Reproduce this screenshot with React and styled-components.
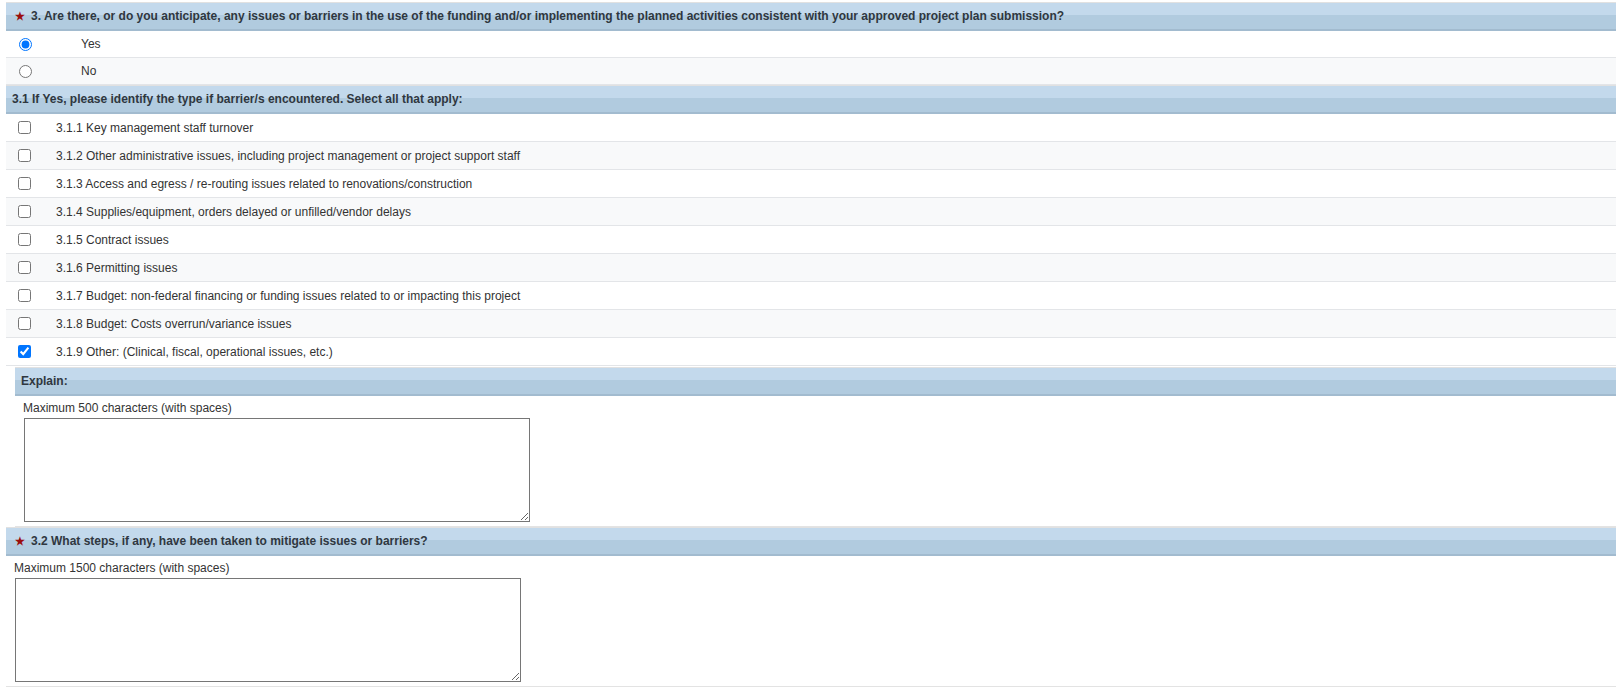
import React from 'react';
import styled, { createGlobalStyle } from 'styled-components';

const GlobalStyle = createGlobalStyle`
  body {
    margin: 0;
    background: #fff;
    font-family: "Liberation Sans", Arial, sans-serif;
    font-size: 12px;
    color: #333;
  }
`;

const Page = styled.div`
  padding: 2px 5px 0 6px;
`;

const Header = styled.div`
  display: flex;
  align-items: center;
  gap: 6px;
  height: 26px;
  padding-left: ${p => (p.$required ? '9px' : '6px')};
  border-top: 1px solid #e1e1e1;
  border-bottom: 2px solid #a2bbcf;
  background: linear-gradient(to bottom, #c3d9ec 0, #c3d9ec 12px, #b1cbdf 12px, #b1cbdf 100%);
  font-weight: bold;
  color: #2f3740;
`;

const Star = styled.span`
  color: #9b0d0d;
  font-size: 11px;
  line-height: 1;
`;

const OptionRow = styled.label`
  display: flex;
  align-items: center;
  gap: ${p => p.$gap}px;
  height: ${p => p.$height}px;
  padding-left: ${p => p.$pad}px;
  border-bottom: 1px solid #e3e5e8;
  background: ${p => (p.$shade ? '#f8f9fa' : '#fff')};
  color: #333;

  input {
    margin: 0;
    width: 13px;
    height: 13px;
  }
`;

const SubBlock = styled.div`
  margin: ${p => p.$top}px 0 0 ${p => p.$indent}px;
  padding-bottom: 4px;
  border-bottom: 1px solid #e3e3e3;
`;

const Hint = styled.div`
  padding: 5px 0 0 8px;
  line-height: 14px;
  color: #333;
`;

const TextBox = styled.textarea`
  display: block;
  box-sizing: border-box;
  width: 506px;
  height: 104px;
  margin: 3px 0 0 8.5px;
  border: 1px solid #767676;
  font-family: "Liberation Sans", Arial, sans-serif;
  font-size: 12px;
`;

const barriers = [
  '3.1.1 Key management staff turnover',
  '3.1.2 Other administrative issues, including project management or project support staff',
  '3.1.3 Access and egress / re-routing issues related to renovations/construction',
  '3.1.4 Supplies/equipment, orders delayed or unfilled/vendor delays',
  '3.1.5 Contract issues',
  '3.1.6 Permitting issues',
  '3.1.7 Budget: non-federal financing or funding issues related to or impacting this project',
  '3.1.8 Budget: Costs overrun/variance issues',
  '3.1.9 Other: (Clinical, fiscal, operational issues, etc.)',
];

export default function App() {
  return (
    <Page>
      <GlobalStyle />
      <Header $required>
        <Star>★</Star>
        3. Are there, or do you anticipate, any issues or barriers in the use of the funding and/or implementing the planned activities consistent with your approved project plan submission?
      </Header>
      <OptionRow $height={26} $pad={13} $gap={49}>
        <input type="radio" name="q3" defaultChecked />
        Yes
      </OptionRow>
      <OptionRow $height={26} $pad={13} $gap={49} $shade>
        <input type="radio" name="q3" />
        No
      </OptionRow>

      <Header>3.1 If Yes, please identify the type if barrier/s encountered. Select all that apply:</Header>
      {barriers.map((text, i) => (
        <OptionRow key={text} $height={27} $pad={12} $gap={25} $shade={i % 2 === 1}>
          <input type="checkbox" defaultChecked={i === barriers.length - 1} />
          {text}
        </OptionRow>
      ))}

      <SubBlock $indent={9} $top={1}>
        <Header>Explain:</Header>
        <Hint>Maximum 500 characters (with spaces)</Hint>
        <TextBox />
      </SubBlock>

      <SubBlock $indent={0} $top={0}>
        <Header $required>
          <Star>★</Star>
          3.2 What steps, if any, have been taken to mitigate issues or barriers?
        </Header>
        <Hint>Maximum 1500 characters (with spaces)</Hint>
        <TextBox />
      </SubBlock>
    </Page>
  );
}
